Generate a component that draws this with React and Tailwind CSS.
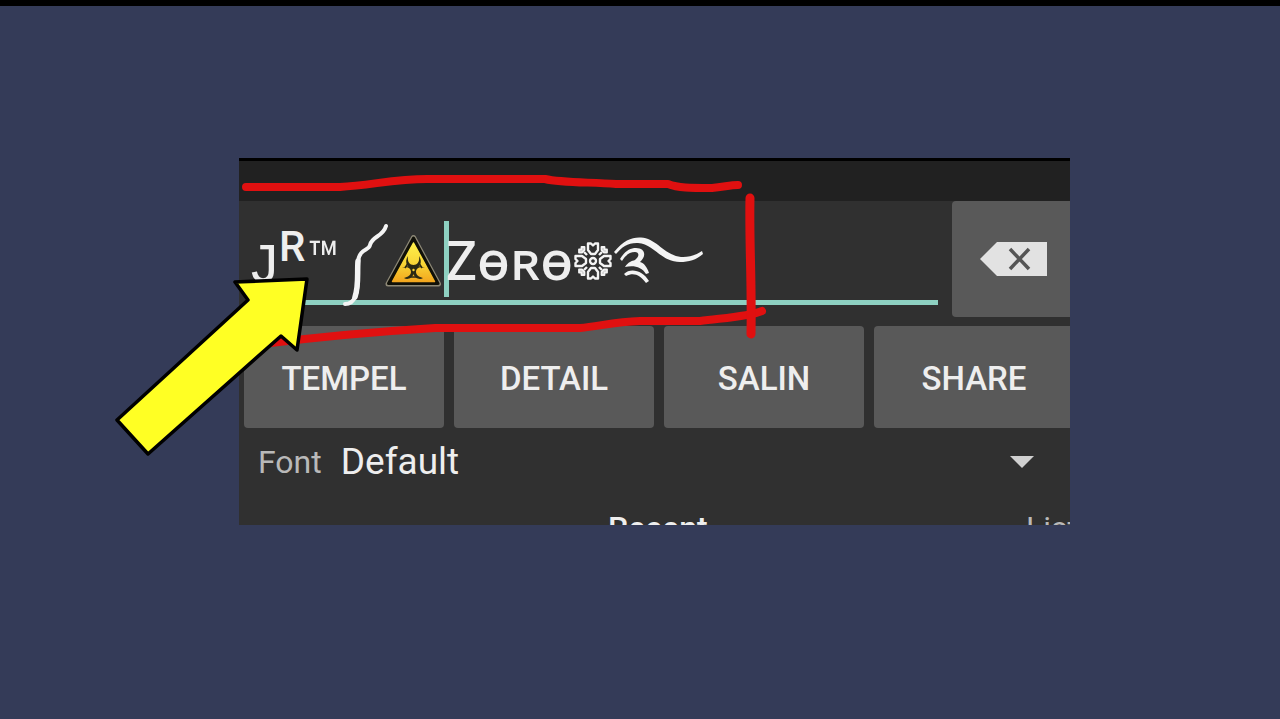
const actions = ["TEMPEL", "DETAIL", "SALIN", "SHARE"];

function Brace() {
  return (
    <svg className="mt-3 h-[84px] w-[46px] shrink-0" viewBox="0 0 46 84" fill="none" stroke="#f4f4f4" strokeLinecap="round" strokeLinejoin="round" aria-hidden="true">
      <path d="M43 3C40 14 29 13 27 22C26 28 17 25 15 38C14 50 17 62 12 74C10 79 7 81 2 81" strokeWidth="4" />
      <path d="M15 38C14 50 16 62 12 74" strokeWidth="5.5" />
    </svg>
  );
}

function Biohazard() {
  return (
    <svg className="mt-1 -ml-1 h-[54px] w-[57px] shrink-0" viewBox="0 0 57 54" aria-hidden="true">
      <defs>
        <linearGradient id="warn" x1="0" y1="0" x2="0" y2="1">
          <stop offset="0" stopColor="#fff04a" />
          <stop offset="0.55" stopColor="#f8d536" />
          <stop offset="1" stopColor="#f3a71e" />
        </linearGradient>
      </defs>
      <path d="M28.500 3.500L53.500 50H3Z" fill="#101008" stroke="#8d8876" strokeWidth="5" strokeLinejoin="round" />
      <path d="M28.500 4L53 49.500H3.500Z" fill="#101008" stroke="#101008" strokeWidth="3" strokeLinejoin="round" />
      <path d="M28.500 9L49.500 47.500H7.500Z" fill="url(#warn)" stroke="url(#warn)" strokeWidth="1.500" strokeLinejoin="round" />
      <g fill="#2b2a14">
        <path d="M23 22C19 28 22 34 28.500 35C35 34 38 28 34 22C35 28 32 31 28.500 31C25 31 22 28 23 22Z" />
        <path d="M17 34C24 30 30 33 29 39C27 45 22 46 19 44C23 43 26 41 26 38C26 34 22 32 17 34Z" />
        <path d="M40 34C33 30 27 33 28 39C30 45 35 46 38 44C34 43 31 41 31 38C31 34 35 32 40 34Z" />
      </g>
      <path d="M22.500 30L20 34M34.500 30L37 34M25 43H32" stroke="#2b2a14" strokeWidth="1.500" />
      <circle cx="28.500" cy="36" r="1.200" fill="#f8d536" />
    </svg>
  );
}

function Flower() {
  return (
    <svg className="mt-1 h-[38px] w-[38px] shrink-0" viewBox="-19 -19 38 38" fill="none" stroke="#f4f4f4" strokeWidth="2.400" strokeLinejoin="round" aria-hidden="true">
      <circle r="3" />
      {[0, 90, 180, 270].map((a) => (
        <g key={a} transform={`rotate(${a})`}>
          <path d="M-2 -7L-5 -11V-17.500H-2L0 -15.500L2 -17.500H5V-11L2 -7Z" />
          <path d="M6 -6L9 -9" />
          <path d="M8.500 -11V-14H11.500V-11.500H14V-8.500H11Z" fill="#c4c4c4" strokeWidth="1.800" />
        </g>
      ))}
    </svg>
  );
}

function Swirl() {
  return (
    <svg className="mt-1 ml-[2px] h-[50px] w-[90px] shrink-0" viewBox="0 0 90 50" fill="#f4f4f4" aria-hidden="true">
      <path d="M0 16C10 4 18 1 27 1.500C42 2 50 19 67 21C75 21.500 82 19 88 15L89 18C82 24 75 26 66 26C47 26 40 8 24 7C14 6.500 8 11 2 18Z" />
      <path d="M6 23C11 15 16 12 22 12C31 12 33 20 26 26C30 27 33 31 35 37L32 38C28 31 20 29 11 31C14 26 18 25 21 24C26 20 25 16 21 16C15 16 11 20 8 25Z" />
      <path d="M10 38C17 31 29 35 35 45L32 47C26 39 20 36 12 40Z" />
    </svg>
  );
}

function Markup() {
  return (
    <svg className="pointer-events-none absolute top-0 left-0 h-[200px] w-[540px]" viewBox="239 158 540 200" fill="none" stroke="#e01010" strokeLinecap="round" strokeLinejoin="round" aria-hidden="true">
      <path d="M246 187H340C372 185 395 179 427 179H545C562 183 590 182 616 184H668C678 188 690 188 712 188C724 187 730 185 738 185" strokeWidth="8" />
      <path d="M262 344C310 338 370 332 435 328H580C600 326 615 322 640 321H700C722 318 748 317 762 311" strokeWidth="8" />
      <path d="M750 198C749 240 752 280 751 334" strokeWidth="9" />
    </svg>
  );
}

function Arrow() {
  return (
    <svg className="pointer-events-none absolute top-[110px] -left-[129px] h-[194px] w-[204px]" viewBox="110 268 204 194" aria-hidden="true">
      <path d="M117 420L248 300L235 282L307 279L297 350L281 336L148 454Z" fill="#ffff24" stroke="#000" strokeWidth="3.500" strokeLinejoin="round" />
    </svg>
  );
}

export default function App() {
  return (
    <main className="min-h-screen border-t-[6px] border-black bg-[#343b58] pt-[152px] pl-[239px] font-['Roboto',sans-serif] text-[#eeeeee]">
      <section className="relative w-[80%] max-w-[831px]">
        <div className="h-[367px] overflow-hidden border-t-[3px] border-black bg-[#303030]">
          <div className="h-10 bg-[#212121]" />
          <div className="flex h-[116px] pl-2">
            <div className="mr-[14px] flex min-w-0 flex-1 flex-col">
              <div className="flex h-[104px] items-center border-b-[5px] border-[#8ed0c1] pt-4">
                <input aria-label="Initial" defaultValue="J" className="mt-4 w-8 bg-transparent font-['Liberation_Mono',monospace] text-[56px] leading-[76px] outline-none" />
                <input aria-label="Superscript" defaultValue="R" className="mb-6 w-7 bg-transparent text-[42px] leading-[60px] font-medium outline-none" />
                <input aria-label="Mark" defaultValue="™" className="mt-1 w-9 bg-transparent text-[54px] leading-[76px] outline-none" />
                <Brace />
                <Biohazard />
                <span className="ml-[2px] h-[76px] w-[5px] shrink-0 bg-[#8ed0c1]" />
                <input aria-label="Name" defaultValue="Zɵʀɵ" className="-ml-[3px] w-32 bg-transparent font-['Noto_Sans','DejaVu_Sans',sans-serif] text-[54px] leading-[76px] font-medium outline-none" />
                <Flower />
                <Swirl />
              </div>
            </div>
            <button type="button" aria-label="Backspace" className="flex w-[118px] items-center justify-center rounded-l-sm bg-[#595959] pl-1">
              <svg className="h-[34px] w-[67px]" viewBox="0 0 67 34" aria-hidden="true">
                <path d="M0 17L17 0H67V34H17Z" fill="#e2e2e2" />
                <path d="M30 7L49 27M49 7L30 27" stroke="#555" strokeWidth="3.500" />
              </svg>
            </button>
          </div>
          <div className="mt-[9px] -mr-1 grid grid-cols-4 gap-[10px] pl-[5px]">
            {actions.map((label) => (
              <button key={label} type="button" className="h-[102px] rounded-sm bg-[#595959] pt-1 text-[33px] font-medium">
                {label}
              </button>
            ))}
          </div>
          <div className="relative flex h-[68px] items-center pl-[19px]">
            <label htmlFor="font" className="text-[32px] text-[#b9b9b9]">Font</label>
            <select id="font" className="ml-[19px] flex-1 appearance-none bg-transparent text-[37px] leading-[48px] outline-none">
              <option>Default</option>
            </select>
            <svg className="pointer-events-none absolute right-9 h-3 w-6" viewBox="0 0 24 12" aria-hidden="true">
              <path d="M0 0H24L12 12Z" fill="#d0d0d0" />
            </svg>
          </div>
          <nav className="flex justify-between pt-3 pl-[369px] text-[32px] leading-10 whitespace-nowrap">
            <a href="#recent" className="font-medium">Recent</a>
            <a href="#list" className="-mr-2 text-[#b9b9b9]">List</a>
          </nav>
        </div>
        <Markup />
        <Arrow />
      </section>
    </main>
  );
}
